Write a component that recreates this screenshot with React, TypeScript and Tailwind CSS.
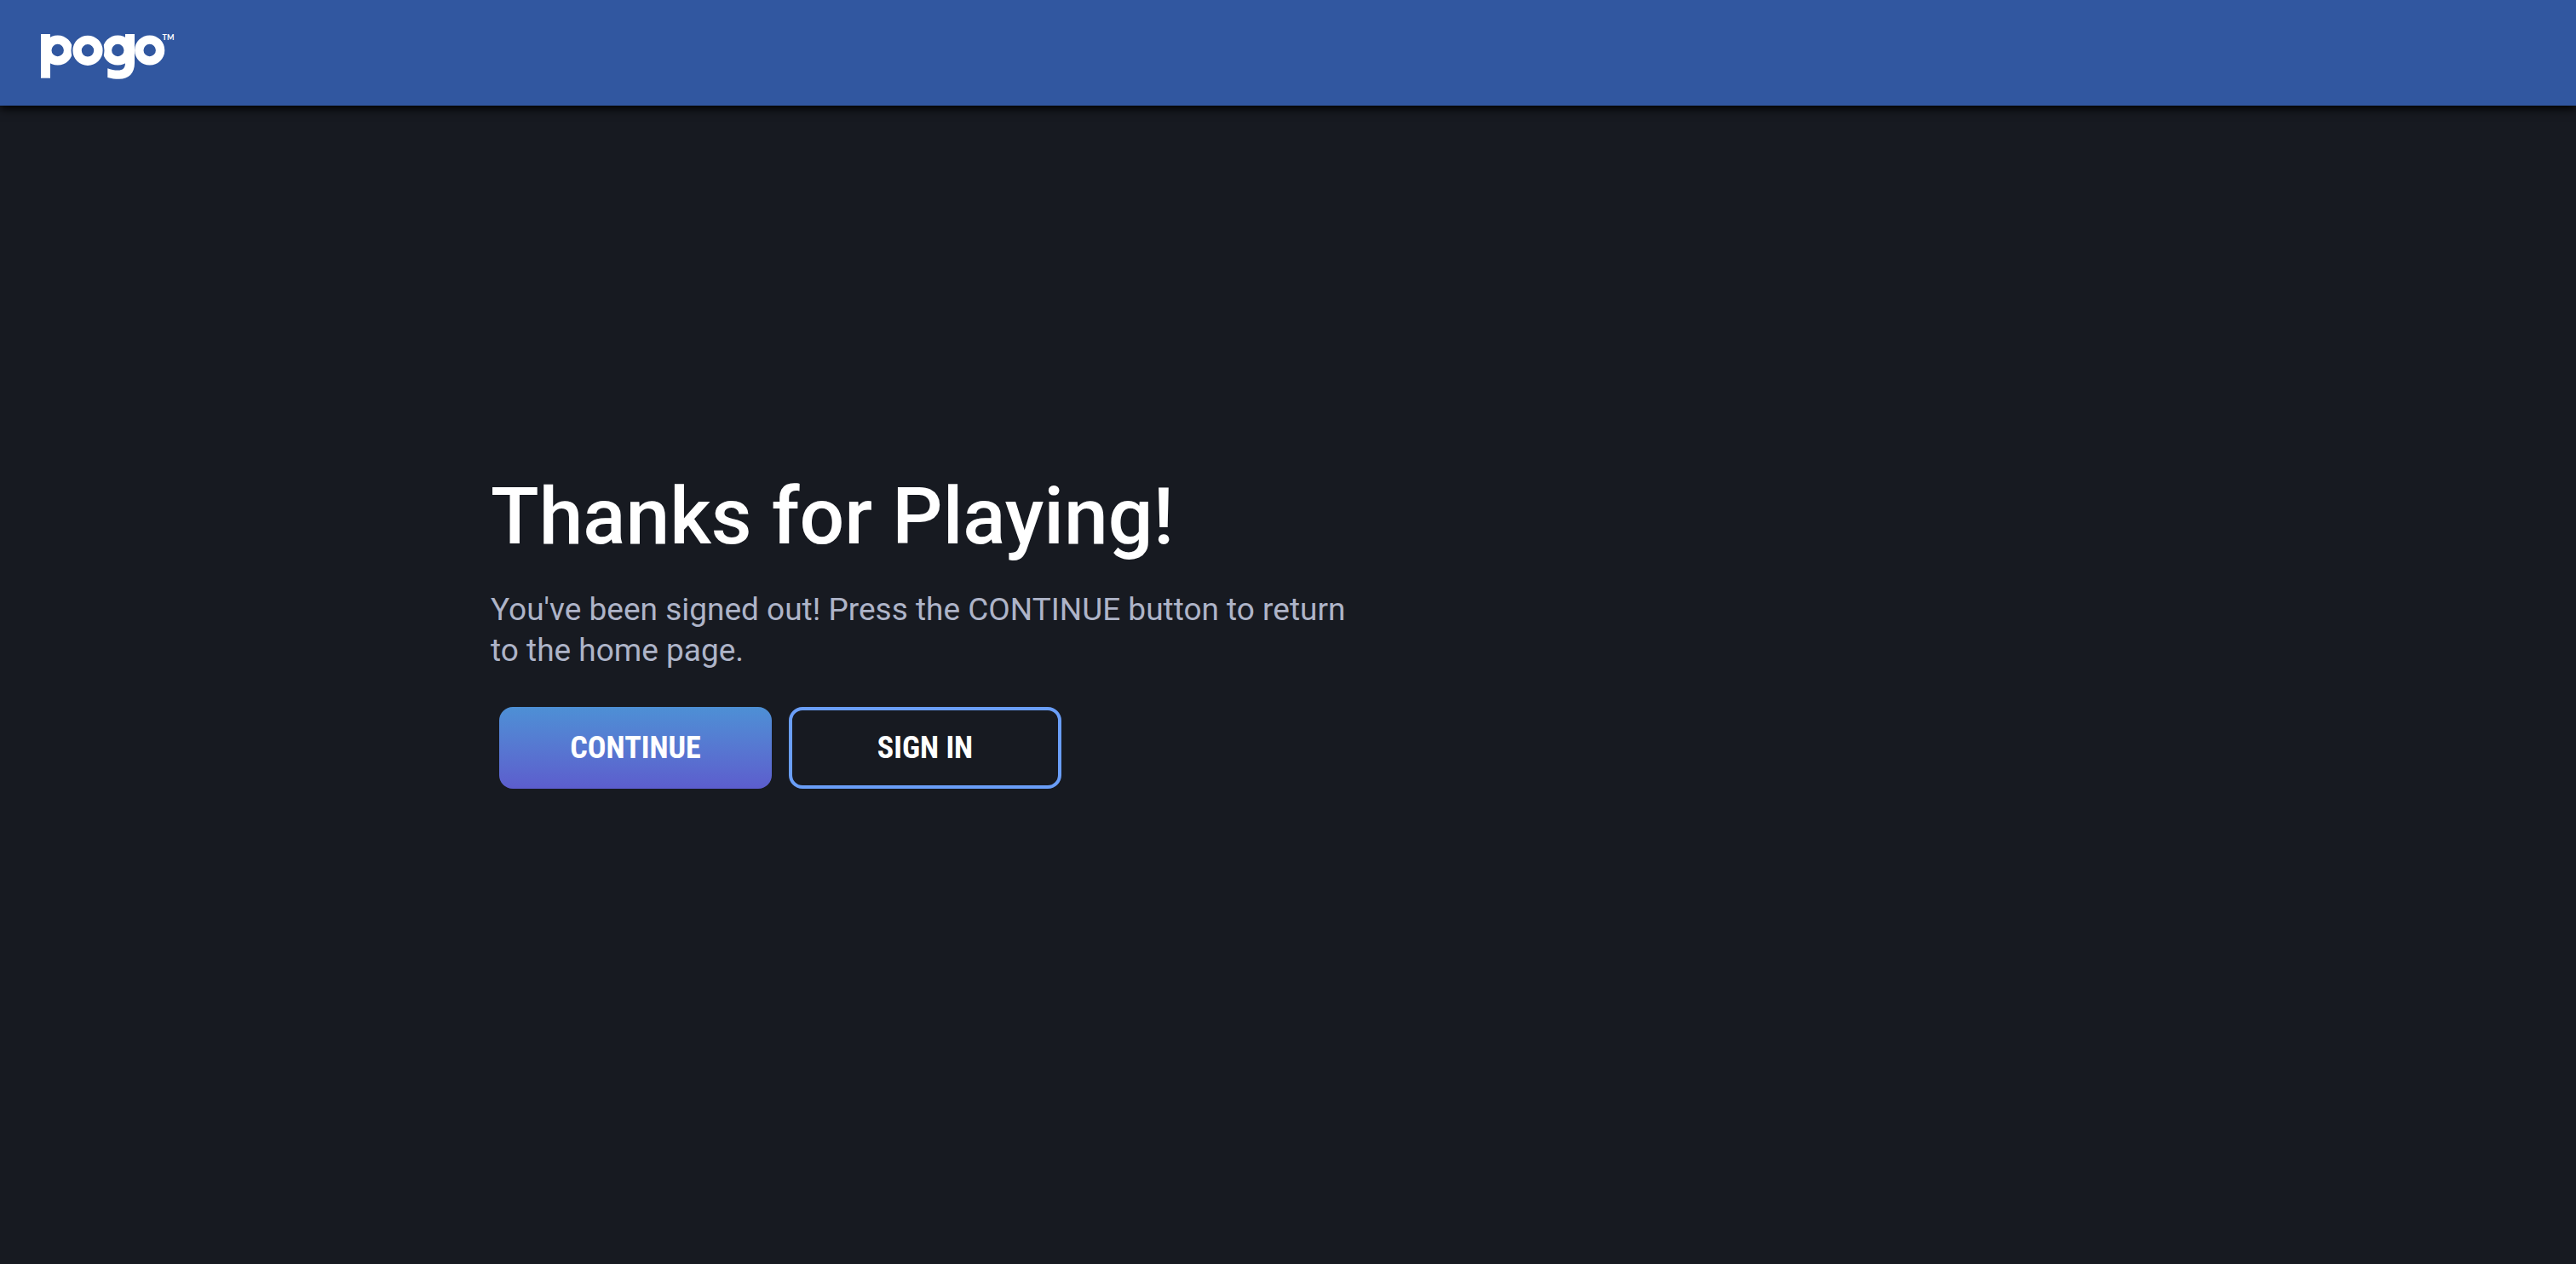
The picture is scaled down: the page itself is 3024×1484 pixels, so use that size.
function PogoLogo() {
  return (
    <svg className="h-[54px] w-[158px]" viewBox="0 0 158 54" role="img" aria-label="pogo">
      <g fill="none" stroke="white" strokeWidth="10.400">
        <circle cx="19.700" cy="20" r="12.400" />
        <path d="M5.500 1v51.700" strokeWidth="11" />
        <circle cx="90.300" cy="20" r="12.400" />
        <path
          d="M99 1h11v34c0 12-7 18.800-18 18.800-5 0-9-.4-13.700-1.800V41.300c4 1.500 8 2.300 12 2.300 6 0 8.700-2.600 8.700-8.600Z"
          fill="white"
          stroke="none"
        />
        <circle cx="127.700" cy="20" r="12.400" />
        <circle cx="55" cy="20.300" r="13.500" stroke="#3157a0" strokeWidth="12" />
        <circle cx="55" cy="20.300" r="12.400" />
      </g>
      <text x="142.500" y="8" fill="white" fontSize="9" fontWeight="700" fontFamily="Lato, sans-serif">
        TM
      </text>
    </svg>
  );
}

const buttonClass =
  "h-24 w-80 rounded-2xl font-['Roboto_Condensed',Roboto,sans-serif] text-[36px] font-bold text-white";

export default function App() {
  return (
    <div className="flex min-h-screen flex-col bg-[#171a21] font-[Roboto,sans-serif] text-white">
      <header className="flex h-[124px] items-center bg-[#3157a0] px-12 shadow-[0_4px_10px_rgba(0,0,0,0.9)]">
        <a href="#home" className="mt-2">
          <PogoLogo />
        </a>
      </header>
      <main className="mx-auto flex w-full max-w-[1872px] flex-1 flex-col items-start pt-[427px]">
        <h1 className="text-[93px] leading-[112px] font-medium">Thanks for Playing!</h1>
        <p className="mt-[29px] max-w-[1008px] text-[37px] leading-[48px] text-[#aeb4c8]">
          You&apos;ve been signed out! Press the CONTINUE button to return to the home page.
        </p>
        <div className="mx-[10px] mt-[42px] flex flex-wrap gap-5">
          <button type="button" className={`${buttonClass} bg-linear-to-b from-[#4d90d5] to-[#5c5dcd]`}>
            CONTINUE
          </button>
          <button type="button" className={`${buttonClass} border-4 border-[#6a9ef8]`}>
            SIGN IN
          </button>
        </div>
      </main>
    </div>
  );
}
